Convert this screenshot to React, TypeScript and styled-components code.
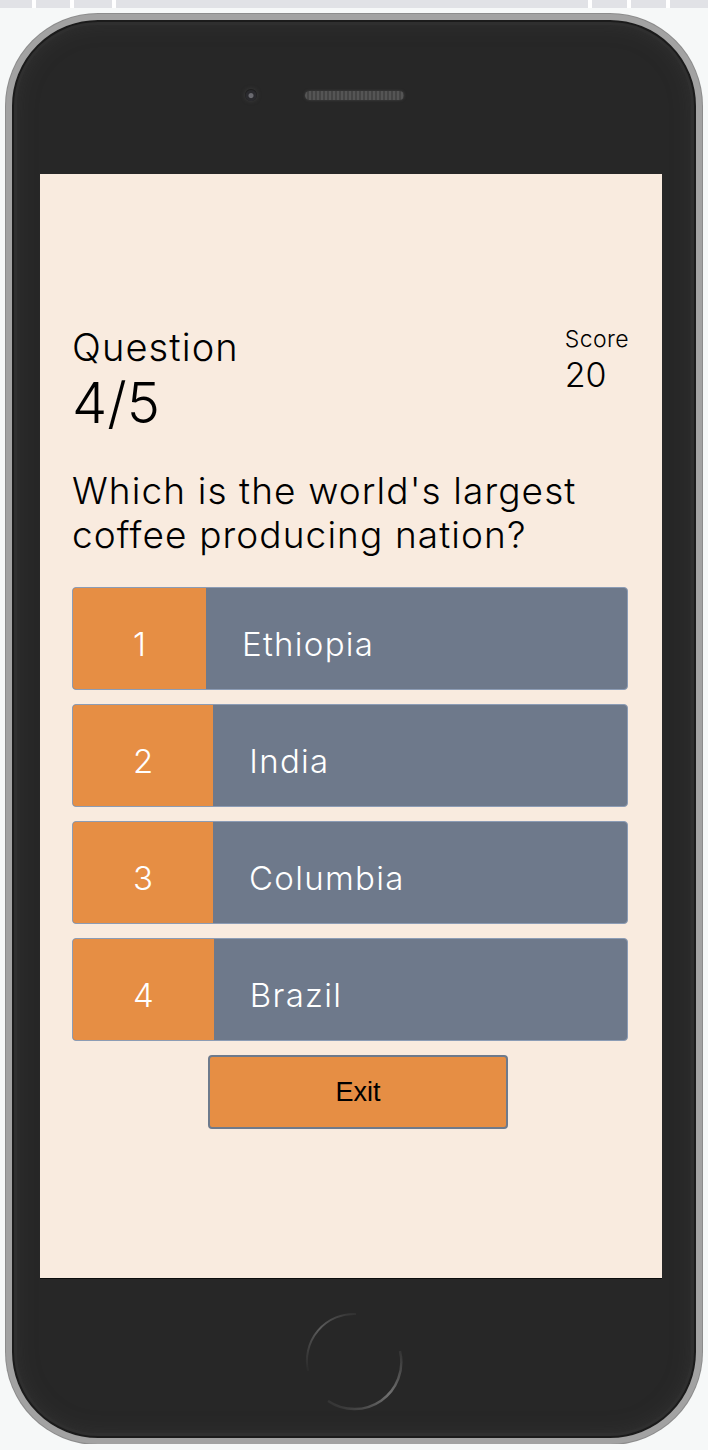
import React from "react";
import styled, { createGlobalStyle } from "styled-components";

const GlobalStyle = createGlobalStyle`
  html, body {
    margin: 0;
    padding: 0;
    background: #f6f8f8;
  }
  * {
    box-sizing: border-box;
  }
`;

const answers = [
  { n: 1, label: "Ethiopia" },
  { n: 2, label: "India" },
  { n: 3, label: "Columbia" },
  { n: 4, label: "Brazil" },
];

const tabWidths = [32, 34, 38, 472, 35, 35, 38];

export default function App() {
  return (
    <>
      <GlobalStyle />
      <TabStrip>
        {tabWidths.map((w, i) => (
          <Tab key={i} $w={w} />
        ))}
      </TabStrip>
      <Phone>
        <SideButton $side="left" $top={160} $h={50} />
        <SideButton $side="left" $top={273} $h={90} />
        <SideButton $side="left" $top={385} $h={92} />
        <SideButton $side="right" $top={277} $h={90} />
        <TopBezel>
          <Camera />
          <Speaker />
        </TopBezel>
        <Screen>
          <Header>
            <div>
              <QuestionLabel>Question</QuestionLabel>
              <QuestionCount>4/5</QuestionCount>
            </div>
            <ScoreBox>
              <ScoreLabel>Score</ScoreLabel>
              <ScoreValue>20</ScoreValue>
            </ScoreBox>
          </Header>
          <QuestionText>
            Which is the world's largest coffee producing nation?
          </QuestionText>
          <AnswerList>
            {answers.map((a) => (
              <AnswerButton key={a.n}>
                <AnswerNumber>{a.n}</AnswerNumber>
                <AnswerText>{a.label}</AnswerText>
              </AnswerButton>
            ))}
          </AnswerList>
          <ExitButton>Exit</ExitButton>
        </Screen>
        <BottomBezel>
          <HomeButton width="100" height="100" viewBox="0 0 100 100">
            <defs>
              <linearGradient id="arcA" x1="0" y1="1" x2="1" y2="0">
                <stop offset="0" stopColor="#2a2a2a" />
                <stop offset="0.5" stopColor="#5c5c5c" />
                <stop offset="1" stopColor="#303030" />
              </linearGradient>
              <linearGradient id="arcB" x1="1" y1="0" x2="0" y2="1">
                <stop offset="0" stopColor="#333" />
                <stop offset="0.45" stopColor="#707070" />
                <stop offset="1" stopColor="#2c2c2c" />
              </linearGradient>
            </defs>
            <path
              d="M 4 60 A 47 47 0 0 1 52 3"
              fill="none"
              stroke="url(#arcA)"
              strokeWidth="2"
            />
            <path
              d="M 96 40 A 47 47 0 0 1 24 90"
              fill="none"
              stroke="url(#arcB)"
              strokeWidth="2.4"
            />
          </HomeButton>
        </BottomBezel>
      </Phone>
    </>
  );
}

const TabStrip = styled.div`
  display: flex;
  gap: 4px;
  height: 8px;
  background: #ffffff;
`;

const Tab = styled.div<{ $w: number }>`
  flex: ${(p) => (p.$w > 400 ? "1" : "none")};
  width: ${(p) => p.$w}px;
  background: #e1e2e6;
`;

const Phone = styled.div`
  position: relative;
  display: flex;
  flex-direction: column;
  width: 696px;
  height: 1430px;
  margin: 6px 0 0 6px;
  border: 6px solid #a2a2a2;
  border-radius: 92px;
  background: #272727;
  box-shadow: 0 0 0 1px #8c8c8c, inset 0 0 0 2px #1b1b1b,
    inset 0 0 0 5px #2f2f2f, inset 0 0 24px rgba(70, 70, 70, 0.45);
`;

const SideButton = styled.div<{ $side: "left" | "right"; $top: number; $h: number }>`
  position: absolute;
  ${(p) => (p.$side === "left" ? "left: -10px;" : "right: -10px;")}
  top: ${(p) => p.$top}px;
  width: 5px;
  height: ${(p) => p.$h}px;
  border-radius: 2px;
  background: #8f8f8f;
  z-index: -1;
`;

const TopBezel = styled.div`
  display: flex;
  align-items: center;
  height: 154px;
  padding: 0 0 4px 233px;
`;

const Camera = styled.div`
  width: 12px;
  height: 12px;
  border-radius: 50%;
  background: radial-gradient(circle at 50% 55%, #6a6a70 0 2px, #2a2a2e 3px 5px, #1e1e1e 6px);
  box-shadow: 0 0 4px rgba(90, 90, 90, 0.5);
`;

const Speaker = styled.div`
  width: 99px;
  height: 9px;
  margin-left: 48px;
  border-radius: 5px;
  background: repeating-linear-gradient(90deg, #555 0 2px, #444 2px 4px);
  box-shadow: 0 0 3px rgba(100, 100, 100, 0.5);
`;

const Screen = styled.div`
  display: flex;
  flex-direction: column;
  width: 622px;
  height: 1104px;
  margin-left: 28px;
  padding: 153px 32px 0 32px;
  background: #f9ebdf;
  box-shadow: 0 1px 0 #0c0c0c;
  font-family: Inter, "Noto Sans", sans-serif;
  font-weight: 350;
  color: #000;
`;

const Header = styled.div`
  display: flex;
  justify-content: space-between;
  align-items: flex-start;
`;

const QuestionLabel = styled.div`
  font-size: 38px;
  line-height: 40px;
  letter-spacing: 1.1px;
`;

const QuestionCount = styled.div`
  margin-top: 6px;
  font-size: 56px;
  line-height: 60px;
  font-weight: 300;
`;

const ScoreBox = styled.div`
  margin-top: -1px;
  padding-right: 1px;
`;

const ScoreLabel = styled.div`
  font-size: 23px;
  line-height: 26px;
  letter-spacing: 0.4px;
`;

const ScoreValue = styled.div`
  margin-top: 5px;
  font-size: 34px;
  line-height: 36px;
  font-weight: 300;
`;

const QuestionText = styled.p`
  margin: 36px 0 0 0;
  font-size: 37px;
  line-height: 44px;
  letter-spacing: 1.1px;
`;

const AnswerList = styled.div`
  display: flex;
  flex-direction: column;
  gap: 14px;
  margin-top: 30px;
  padding-right: 2px;
`;

const AnswerButton = styled.div`
  display: flex;
  height: 103px;
  border: 1px solid #8c9cb5;
  border-radius: 4px;
  overflow: hidden;
  background: #6e798b;
  color: #ffffff;
  font-size: 33px;
  letter-spacing: 1.3px;
`;

const AnswerNumber = styled.span`
  display: flex;
  align-items: center;
  padding: 11px 60px 0;
  background: #e68e44;
  font-weight: 300;
  letter-spacing: 0;
`;

const AnswerText = styled.span`
  display: flex;
  align-items: center;
  padding: 11px 0 0 36px;
`;

const ExitButton = styled.button`
  width: 300px;
  height: 74px;
  margin: 14px 0 0 136px;
  padding: 0;
  border: 2px solid #6e7a8c;
  border-radius: 4px;
  background: #e68e44;
  color: #000;
  font-family: "Liberation Sans", Arial, sans-serif;
  font-size: 27px;
`;

const BottomBezel = styled.div`
  flex: 1;
  display: flex;
  justify-content: center;
  padding-top: 33px;
`;

const HomeButton = styled.svg`
  display: block;
`;
